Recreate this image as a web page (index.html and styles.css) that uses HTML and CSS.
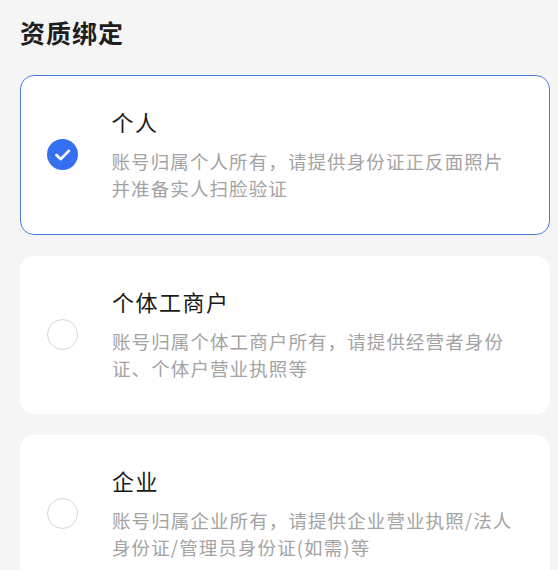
FILE: index.html
```html
<!DOCTYPE html>
<html lang="zh-CN">
<head>
<meta charset="utf-8">
<title>资质绑定</title>
<link rel="stylesheet" href="styles.css">
</head>
<body>
<div class="page">
  <h1 class="heading">资质绑定</h1>
  <div class="options">
    <div class="card card-selected">
      <span class="check">
        <svg viewBox="0 0 24 24" width="31" height="31" aria-hidden="true">
          <circle cx="12" cy="12" r="12" fill="#3470ef"/>
          <path d="M7.3 12.4 L10.7 15.6 L16.9 9.2" fill="none" stroke="#ffffff" stroke-width="2.1" stroke-linecap="round" stroke-linejoin="round"/>
        </svg>
      </span>
      <div class="info">
        <div class="name">个人</div>
        <div class="desc">账号归属个人所有，请提供身份证正反面照片并准备实人扫脸验证</div>
      </div>
    </div>
    <div class="card">
      <span class="radio"></span>
      <div class="info">
        <div class="name">个体工商户</div>
        <div class="desc">账号归属个体工商户所有，请提供经营者身份证、个体户营业执照等</div>
      </div>
    </div>
    <div class="card">
      <span class="radio"></span>
      <div class="info">
        <div class="name">企业</div>
        <div class="desc">账号归属企业所有，请提供企业营业执照/法人身份证/管理员身份证(如需)等</div>
      </div>
    </div>
  </div>
</div>
</body>
</html>
```
FILE: styles.css
```css
html, body {
  margin: 0;
  padding: 0;
  background: #f5f5f5;
}
body {
  font-family: "Noto Sans CJK SC", "Noto Sans", sans-serif;
  color: #1b1b1b;
}
.page {
  padding: 14px 8px 0 20px;
}
.heading {
  margin: 0 0 25px 0;
  font-size: 25px;
  line-height: 36px;
  font-weight: 700;
  letter-spacing: 1px;
  color: #1e1e1e;
}
.options {
  display: flex;
  flex-direction: column;
  gap: 21px;
}
.card {
  display: flex;
  align-items: center;
  gap: 34px;
  background: #ffffff;
  border-radius: 14px;
  padding: 30px 32px 32px 27px;
}
.card-selected {
  border: 1.5px solid #4a7ddb;
  padding: 30px 30.5px 32px 25.5px;
}
.check {
  flex: 0 0 31px;
  width: 31px;
  height: 31px;
  display: block;
}
.check svg {
  display: block;
}
.radio {
  flex: 0 0 31px;
  width: 31px;
  height: 31px;
  box-sizing: border-box;
  border: 1.5px solid #d6d6d6;
  border-radius: 50%;
  display: block;
}
.info {
  display: flex;
  flex-direction: column;
  gap: 12px;
  min-width: 0;
}
.name {
  font-size: 22px;
  line-height: 30px;
  letter-spacing: 1.5px;
  color: #1a1a1a;
}
.desc {
  font-size: 18.5px;
  line-height: 27px;
  letter-spacing: 1.1px;
  color: #a3a3a3;
}
```
